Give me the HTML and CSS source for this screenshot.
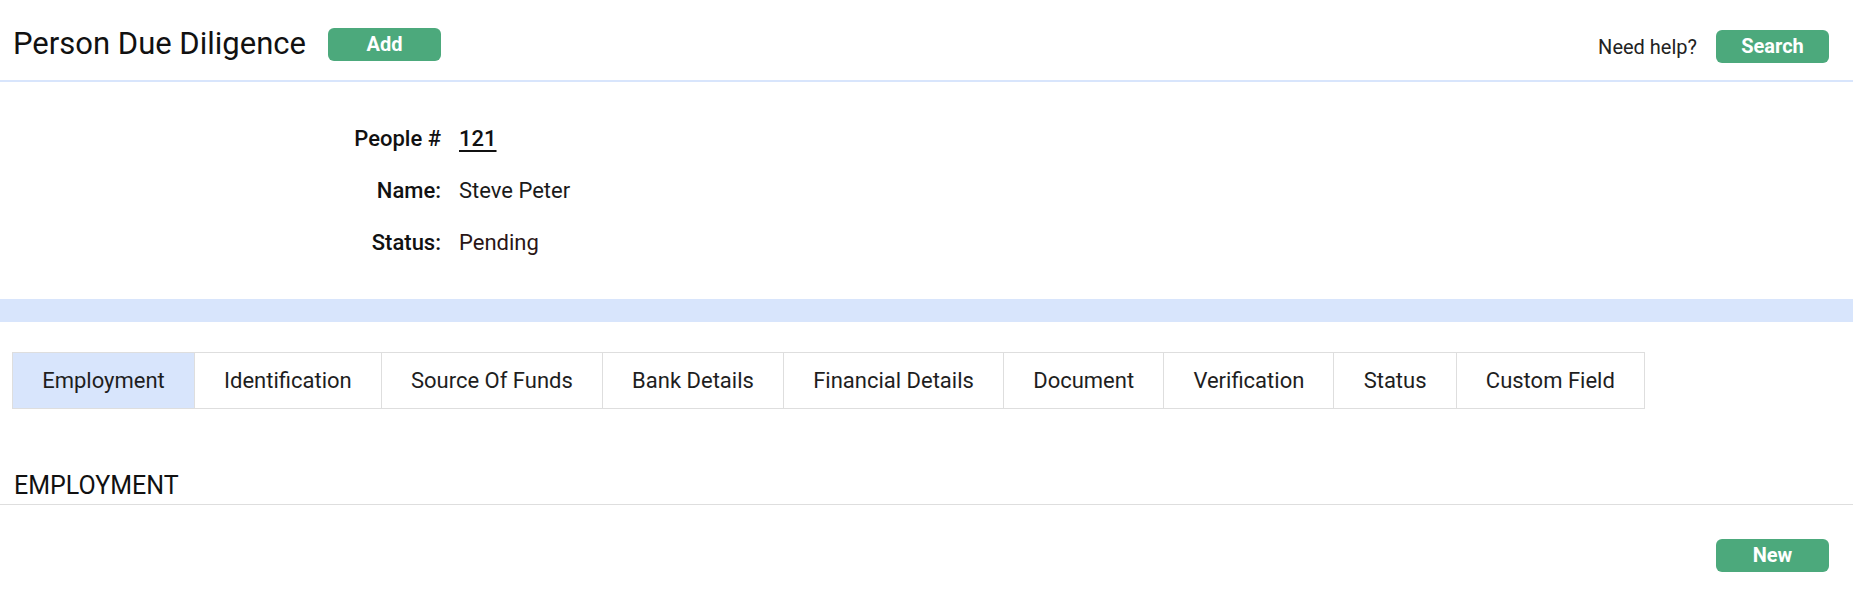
FILE: index.html
```html
<!DOCTYPE html>
<html lang="en">
<head>
<meta charset="utf-8">
<title>Person Due Diligence</title>
<link rel="stylesheet" href="styles.css">
</head>
<body>
<header class="topbar">
  <div class="topbar-left">
    <h1 class="page-title">Person Due Diligence</h1>
    <button class="btn btn-add">Add</button>
  </div>
  <div class="topbar-right">
    <span class="help">Need help?</span>
    <button class="btn btn-search">Search</button>
  </div>
</header>

<section class="info">
  <div class="info-label">People #</div>
  <div class="info-value"><a class="people-link" href="#">121</a></div>
  <div class="info-label">Name:</div>
  <div class="info-value">Steve Peter</div>
  <div class="info-label">Status:</div>
  <div class="info-value status">Pending</div>
</section>

<div class="band"></div>

<nav class="tabs">
  <div class="tab active">Employment</div>
  <div class="tab">Identification</div>
  <div class="tab">Source Of Funds</div>
  <div class="tab">Bank Details</div>
  <div class="tab">Financial Details</div>
  <div class="tab">Document</div>
  <div class="tab">Verification</div>
  <div class="tab">Status</div>
  <div class="tab">Custom Field</div>
</nav>

<h2 class="section-title">EMPLOYMENT</h2>

<div class="actions">
  <button class="btn btn-new">New</button>
</div>
</body>
</html>
```

FILE: styles.css
```css
* { box-sizing: border-box; }

html, body {
  margin: 0;
  padding: 0;
  background: #ffffff;
  font-family: Roboto, "Liberation Sans", sans-serif;
  color: #1a1a1a;
}

.topbar {
  display: flex;
  justify-content: space-between;
  align-items: flex-start;
  height: 82px;
  border-bottom: 2px solid #d8e5fc;
  padding: 0 24px 0 13px;
}

.topbar-left {
  display: flex;
  align-items: center;
  padding-top: 26px;
}

.page-title {
  margin: 0;
  font-size: 31px;
  font-weight: 400;
  line-height: 36px;
  color: #111;
}

.btn {
  border: none;
  background: #4ca97c;
  color: #fff;
  font-family: Roboto, "Liberation Sans", sans-serif;
  font-weight: 700;
  font-size: 20px;
  width: 113px;
  height: 33px;
  border-radius: 6px;
  padding: 0;
  line-height: 33px;
  cursor: pointer;
}

.btn-add {
  margin-left: 22px;
}

.topbar-right {
  display: flex;
  align-items: center;
  padding-top: 30px;
  gap: 19px;
}

.help {
  font-size: 20px;
  color: #222;
}

.info {
  display: grid;
  grid-template-columns: 441px auto;
  column-gap: 18px;
  grid-auto-rows: 52px;
  align-items: center;
  padding: 30px 0 31px;
  font-size: 22px;
}

.info-label {
  text-align: right;
  font-weight: 500;
  color: #111;
}

.info-value {
  color: #1a1a1a;
}

.people-link {
  color: #111;
  text-decoration: underline;
  text-underline-offset: 4px;
  text-decoration-thickness: 2px;
  font-weight: 500;
}

.status { color: #2a1616; }

.band {
  height: 23px;
  background: #d8e5fc;
}

.tabs {
  display: flex;
  margin: 30px 0 0 12px;
  width: max-content;
  border: 1px solid #dedede;
}

.tab {
  height: 55px;
  line-height: 55px;
  padding: 0 29.15px;
  font-size: 22px;
  color: #1e1e1e;
  border-left: 1px solid #dedede;
  background: #fff;
}

.tab:first-child { border-left: none; }

.tab.active { background: #d8e5fc; }

.section-title {
  margin: 62px 0 0;
  padding: 0 0 4px 14px;
  font-size: 25px;
  font-weight: 400;
  line-height: 29px;
  color: #111;
  border-bottom: 1px solid #dedede;
}

.actions {
  display: flex;
  justify-content: flex-end;
  padding: 34px 24px 0 0;
}
```
